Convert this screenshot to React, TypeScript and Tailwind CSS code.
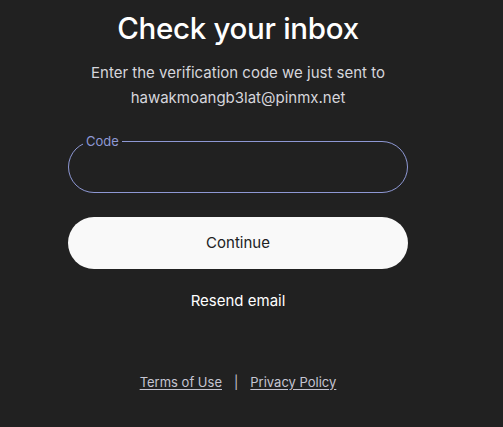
import React from 'react';

export default function App() {
  return (
    <div className="min-h-[427px] w-full bg-[#212121] font-['Inter',sans-serif] text-white">
      <div className="ml-[68px] flex w-[340px] flex-col items-center pt-[10px]">
        <h1 className="text-[29.5px] font-medium leading-[36px] tracking-[-0.3px] text-white">
          Check your inbox
        </h1>
        <p className="mt-[14px] text-center text-[15px] leading-[25px] text-[#d6d6dc]">
          Enter the verification code we just sent to
          <br />
          hawakmoangb3lat@pinmx.net
        </p>

        <div className="relative mt-[24px] w-full">
          <fieldset className="h-[59px] w-full rounded-full border border-[#8e98d4] px-[14px]">
            <legend className="px-[3px] text-[13px] leading-[14px] text-[#8e98d4]">Code</legend>
            <input className="h-full w-full bg-transparent text-[16px] text-white outline-none" />
          </fieldset>
        </div>

        <button className="mt-[24px] h-[52px] w-full rounded-full bg-[#f9f9f9] text-[15px] text-[#202123]">
          Continue
        </button>

        <button className="mt-[21px] text-[15px] text-white">Resend email</button>

        <div className="mt-[60px] flex items-center gap-[12px] text-[13px] text-[#c5c5d2]">
          <a className="underline underline-offset-2">Terms of Use</a>
          <span className="text-[#c5c5d2]">|</span>
          <a className="underline underline-offset-2">Privacy Policy</a>
        </div>
      </div>
    </div>
  );
}
